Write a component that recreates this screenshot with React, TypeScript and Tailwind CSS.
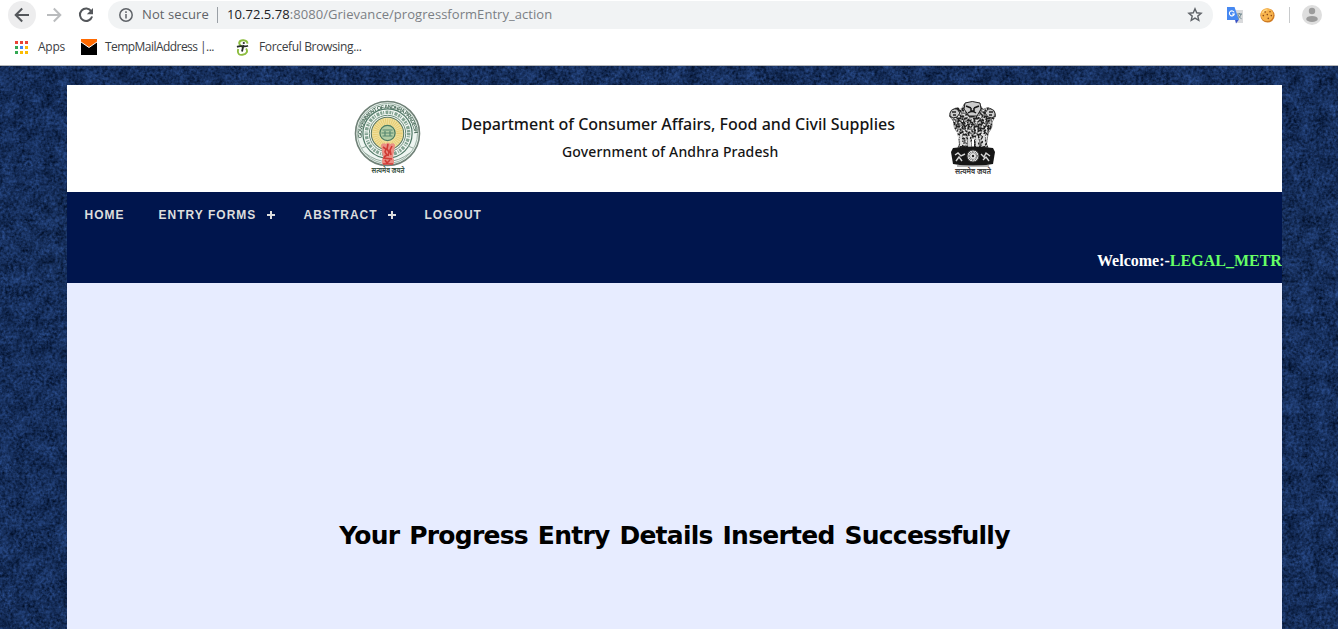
import React from "react";

function AppsIcon() {
  const colors = ["#ea4335", "#ea4335", "#ea4335", "#34a853", "#4285f4", "#fbbc04", "#34a853", "#fbbc04", "#fbbc04"];
  return (
    <svg width="13" height="13" viewBox="0 0 13 13" shapeRendering="crispEdges">
      {colors.map((c, i) => (
        <rect key={i} x={(i % 3) * 5} y={Math.floor(i / 3) * 5} width="3" height="3" fill={c} />
      ))}
    </svg>
  );
}

function BrowserBar() {
  return (
    <div className="relative z-10 h-[66px] shrink-0 border-b border-[#b5b7ba] bg-white font-['Open_Sans',sans-serif]">
      <div className="flex h-[30px] items-center pl-2">
        <div className="flex h-7 w-7 items-center justify-center rounded-full bg-[#ededee]">
          <svg width="16" height="16" viewBox="0 0 16 16" fill="none" stroke="#54575b" strokeWidth="2">
            <path d="M15 8H2M8.2 1.5 1.7 8l6.5 6.5" />
          </svg>
        </div>
        <svg className="ml-[10px]" width="16" height="16" viewBox="0 0 16 16" fill="none" stroke="#babcbe" strokeWidth="2">
          <path d="M1 8h13M7.8 1.5 14.3 8l-6.5 6.5" />
        </svg>
        <svg className="ml-4" width="16" height="16" viewBox="0 0 16 16">
          <path d="M13.3 4.2A6.2 6.2 0 1 0 14.1 9.5" fill="none" stroke="#54575b" strokeWidth="2" />
          <path d="M15 1v6.2H8.8z" fill="#54575b" />
        </svg>
        <div className="ml-[14px] flex h-7 w-[1105px] items-center rounded-full bg-[#f1f3f4] pl-[11px] text-[13px]">
          <svg width="14" height="14" viewBox="0 0 14 14" fill="none" stroke="#5f6368" strokeWidth="1.5">
            <circle cx="7" cy="7" r="6.2" />
            <path d="M7 6v4.4M7 3.3v1.6" />
          </svg>
          <span className="ml-[9px] w-[75px] whitespace-nowrap tracking-[0.1px] text-[#5f6368]">Not secure</span>
          <span className="h-4 w-px bg-[#9aa0a6]" />
          <span className="ml-[9px] whitespace-nowrap tracking-[0.05px] text-[#7b7f84]">
            <span className="text-[#202124]">10.72.5.78</span>:8080/Grievance/progressformEntry_action
          </span>
          <svg className="ml-auto mr-[10px]" width="16" height="16" viewBox="0 0 16 16" fill="none" stroke="#5f6368" strokeWidth="1.4">
            <path d="m8 1.8 1.7 4 4.4.4-3.3 2.9 1 4.3L8 11.1l-3.8 2.3 1-4.3-3.3-2.9 4.4-.4z" />
          </svg>
        </div>
        <svg className="ml-[14px]" width="16" height="17" viewBox="0 0 16 17">
          <path d="M5 3h11v13H9z" fill="#d9dadc" />
          <path d="M8 12.5h4L9 16.4z" fill="#3750c8" />
          <path d="M0 0h7.5L12 13H0z" fill="#4688f1" />
          <path d="M7.2 5.4A2.5 2.5 0 1 0 7.3 7H5" fill="none" stroke="white" strokeWidth="1.1" />
          <path d="M10 7h5M12.3 6v1M14 7c-.3 2-1.5 3.5-3 4.5M11 8c.7 1.6 1.8 2.7 3.5 3.7" fill="none" stroke="#607d83" strokeWidth=".9" />
        </svg>
        <svg className="ml-[17px]" width="15" height="15" viewBox="0 0 15 15">
          <circle cx="7.5" cy="7.5" r="7.1" fill="#cf7b22" />
          <circle cx="7" cy="6.6" r="6.4" fill="#f7b34c" />
          <path d="M2.5 5a5 5 0 0 1 5-3" stroke="#ffd883" strokeWidth="1.2" fill="none" />
          <g fill="#8a4a1c">
            <circle cx="5.2" cy="4" r=".8" /><circle cx="10" cy="3.8" r=".8" /><circle cx="7.3" cy="6.6" r=".8" />
            <circle cx="3.3" cy="7.6" r=".8" /><circle cx="11.3" cy="7.6" r=".8" /><circle cx="8.3" cy="10.4" r=".8" />
          </g>
        </svg>
        <span className="ml-[14px] h-4 w-px bg-[#c8cacc]" />
        <svg className="ml-[12px]" width="20" height="20" viewBox="0 0 20 20">
          <circle cx="10" cy="10" r="10" fill="#dedede" />
          <circle cx="10" cy="6" r="3.2" fill="#9b9b9b" />
          <ellipse cx="10" cy="13.9" rx="5.8" ry="3" fill="#9b9b9b" />
        </svg>
      </div>
      <div className="flex h-[34px] items-center pl-[15px] text-[12px] text-[#3c4043]">
        <AppsIcon />
        <span className="ml-[10px] w-[43px] whitespace-nowrap tracking-[-0.25px]">Apps</span>
        <svg width="16" height="16" viewBox="0 0 16 16">
          <path d="M0 0h16v16H0z" fill="#000" />
          <path d="M0 0h16v3L8 8.5 0 3z" fill="#ff6a00" />
          <path d="m0 3 8 5.5L16 3" fill="none" stroke="white" strokeWidth="1" />
        </svg>
        <span className="ml-2 w-[130px] whitespace-nowrap tracking-[-0.55px]">TempMailAddress |...</span>
        <svg width="16" height="17" viewBox="0 0 16 17" fill="none">
          <path d="M12.5 4.6C12.2.4 5 .2 4.2 3.7 3.7 6.4 7 7.3 8.4 8.4M3.2 10C1.9 15.6 5 16.2 7.5 15.8 12 15.3 13 12 11 9.5" stroke="#8cbd3f" strokeWidth="1.9" />
          <path d="M2 7.8c3.8-1.6 7.5.6 11-1.1M8.5 6 7 12.5" stroke="#252c26" strokeWidth="1.8" />
          <circle cx="8.8" cy="4" r="1.1" fill="#252c26" />
        </svg>
        <span className="ml-2 whitespace-nowrap tracking-[-0.35px]">Forceful Browsing...</span>
      </div>
    </div>
  );
}

function StateSeal() {
  return (
    <svg width="70" height="80" viewBox="0 0 70 80">
      <defs>
        <path id="seal-ring" d="M9 39a26.2 26.2 0 1 1 52 0" />
        <filter id="seal-soft"><feGaussianBlur stdDeviation=".4" /></filter>
      </defs>
      <g filter="url(#seal-soft)">
        <circle cx="34.5" cy="34.5" r="32" fill="#eef5f1" stroke="#6f8177" strokeWidth="1.6" />
        <circle cx="34.5" cy="34.5" r="30" fill="none" stroke="#9eb5a8" strokeWidth="1" />
        <text className="fill-[#4b6c5b] font-['Liberation_Sans',sans-serif] text-[5.6px] font-bold">
          <textPath href="#seal-ring" textLength="84">GOVERNMENT OF ANDHRA PRADESH</textPath>
        </text>
        <circle cx="34.5" cy="34.5" r="24.6" fill="#f3f8f4" stroke="#4f7866" strokeWidth="1.2" />
        <circle cx="34.5" cy="34.5" r="21.2" fill="none" stroke="#83a392" strokeWidth="3.4" strokeDasharray="2 .8 1 1.4 3 1" />
        <circle cx="34.5" cy="34.5" r="18.2" fill="none" stroke="#678b78" strokeWidth="1" />
        <circle cx="34.5" cy="34.5" r="16.2" fill="#f0df9a" stroke="#5c7862" strokeWidth="1.1" />
        <circle cx="34.5" cy="34.5" r="12" fill="none" stroke="#e5ca70" strokeWidth="6" strokeDasharray=".8 1.2" />
        <circle cx="34.5" cy="34" r="7.6" fill="#b3cda5" stroke="#4b7b61" strokeWidth="1.3" />
        <path d="M29.5 31h10M28.5 34h12M29.5 37h10M32 32v5M37 32v5" stroke="#578770" strokeWidth="1.2" />
        <path d="M9 49l5-2M12 54q22 17 45 0M55 47l5 2" fill="none" stroke="#8fa599" strokeWidth="1" />
        <path d="M28 46q2-3 5-1 2-3 4 0 4-2 5 1l-1 7-1 5 1 3v4H29v-4l1-3-1-5z" fill="#ea8f84" />
        <path d="M30 48l3 2-1 3 2 3-3 2M35 45l-1 5 2 3-1 4M39 47l-2 4 1 5M30 59l9 1M30 65h10M32 61l2 3 3-3" fill="none" stroke="#cf3a34" strokeWidth="1.6" />
      </g>
      <text x="35" y="73.5" textAnchor="middle" textLength="33" lengthAdjust="spacingAndGlyphs" className="fill-[#42584b] font-['Noto_Sans',sans-serif] text-[8px] font-bold">सत्यमेव जयते</text>
    </svg>
  );
}

function LionCapital() {
  return (
    <svg width="50" height="76" viewBox="0 0 50 76">
      <defs>
        <filter id="fur" x="-5%" y="-5%" width="110%" height="110%">
          <feTurbulence type="fractalNoise" baseFrequency=".5" numOctaves="2" seed="4" result="noise" />
          <feColorMatrix in="noise" type="matrix" values="0 0 0 0 .8  0 0 0 0 .8  0 0 0 0 .8  4 0 0 0 -1.8" result="flecks" />
          <feComposite in="flecks" in2="SourceGraphic" operator="in" result="highlights" />
          <feMerge result="coat"><feMergeNode in="SourceGraphic" /><feMergeNode in="highlights" /></feMerge>
          <feGaussianBlur in="coat" stdDeviation=".4" />
        </filter>
      </defs>
      <g filter="url(#fur)" fill="#222">
        <path d="M16 4q4-3 8-1 5-2 8 1l3 5 5-2 6 3 2 6-3 5-1 7-4 6-5 4-3-2-7 3-7-3-3 2-5-4-4-6-1-7-4-5 2-6 6-3 4 2z" />
        <path d="M9 30h8l1 19H9l2-5zM18 33h6v16h-6zM26 33h6v16h-6zM33 30h8l-2 14 2 5h-9z" />
      </g>
      <g fill="none" stroke="#222" strokeWidth="1">
        <path d="M2 13q2-5 7-4l3 4-3 4-4 1-3-2zm45 0q-2-5-7-4l-3 4 3 4 4 1 3-2z" fill="#ccc" />
        <path d="M4 12h4m-3 3h3M45 12h-4m3 3h-3" strokeWidth="1.4" />
        <path d="M11 19q-3 4 1 8M38 19q3 4-1 8M17 18q-4 6 1 11M32 18q4 6-1 11" />
        <path d="M17 3q7-3 15 0l1 6-4 7h-8l-5-7z" fill="#ccc" />
        <path d="m18 6 5 2m8-2-5 2m-3 0v3h3V8m-6 5q4-3 8 0" stroke="#151515" strokeWidth="1.5" />
      </g>
      <path d="M13 34v12M21 36v12M29 36v12M36 34v12" stroke="#e6e6e6" strokeWidth="1.8" />
      <path d="M5 48q20-3 40 0l2 4-2 12q-20 4-40 0L3 52z" fill="#161616" />
      <path d="m7 55 3-2 3 3 4-2M33 54l3 3 2-4 4 3M8 61l3-4 3 4m21-1 3-3 3 4" fill="none" stroke="#d5d5d5" strokeWidth="1.4" />
      <circle cx="25" cy="56" r="6" fill="#e5e5e5" stroke="#333" />
      <circle cx="25" cy="56" r="3.8" fill="none" stroke="#555" strokeWidth="2" strokeDasharray=".7 .8" />
      <circle cx="25" cy="56" r="1.2" fill="#222" />
      <path d="M9 66h32" stroke="#999" strokeWidth="1.5" />
      <text x="25" y="74" textAnchor="middle" textLength="36" lengthAdjust="spacingAndGlyphs" className="fill-[#444] font-['Noto_Sans',sans-serif] text-[8px] font-bold">सत्यमेव जयते</text>
    </svg>
  );
}

function Plus() {
  return (
    <svg width="8" height="8" viewBox="0 0 8 8" shapeRendering="crispEdges" className="mb-px">
      <path d="M3 0h2v3h3v2H5v3H3V5H0V3h3z" fill="#ddd" />
    </svg>
  );
}

export default function App() {
  return (
    <div className="relative flex h-[629px] w-[1338px] flex-col overflow-hidden bg-[#142f60]">
      <svg className="absolute inset-0" width="1338" height="629" aria-hidden="true">
        <filter id="felt" x="0" y="0" width="100%" height="100%" colorInterpolationFilters="sRGB">
          <feTurbulence type="fractalNoise" baseFrequency=".36" numOctaves="2" seed="12" result="fine" />
          <feTurbulence type="fractalNoise" baseFrequency=".07" numOctaves="3" seed="5" result="broad" />
          <feComposite in="fine" in2="broad" operator="arithmetic" k2=".6" k3=".4" />
          <feColorMatrix type="matrix" values=".28 0 0 0 -.055  .42 0 0 0 -.03  .68 0 0 0 .015  0 0 0 0 1" />
        </filter>
        <rect width="1338" height="629" filter="url(#felt)" />
      </svg>
      <BrowserBar />
      <main className="relative z-10 ml-[67px] mt-[19px] flex min-h-0 w-[1215px] flex-1 flex-col overflow-hidden bg-[#e7ecff]">
        <header className="flex h-[107px] shrink-0 bg-white pl-[286px] pt-[14px]">
          <StateSeal />
          <div className="ml-[38px] w-[434px] pt-[13px] font-['Noto_Sans',sans-serif] font-medium text-[#151515]">
            <div className="whitespace-nowrap text-[16px] leading-[24px]">Department of Consumer Affairs, Food and Civil Supplies</div>
            <div className="ml-[101px] mt-1 whitespace-nowrap text-[14px] leading-[24px] tracking-[0.16px]">Government of Andhra Pradesh</div>
          </div>
          <div className="ml-[53px] mt-px"><LionCapital /></div>
        </header>
        <div className="h-[91px] shrink-0 bg-[#00154d]">
          <nav className="flex h-[46px] items-center pl-[17.5px] font-['Liberation_Sans',sans-serif] text-[12px] font-bold tracking-[1.02px] text-[#ddd]">
            <a className="w-[74px]">HOME</a>
            <a className="flex w-[145px] items-center whitespace-nowrap"><span className="w-[108.5px]">ENTRY FORMS</span><Plus /></a>
            <a className="flex w-[121px] items-center whitespace-nowrap"><span className="w-[84.5px]">ABSTRACT</span><Plus /></a>
            <a>LOGOUT</a>
          </nav>
          <div className="ml-[1030px] mt-[13px] overflow-hidden whitespace-nowrap font-['Liberation_Serif',serif] text-[16px] font-bold leading-5 text-white">
            Welcome:-<span className="text-[#66ff66]">LEGAL_METR</span>
          </div>
        </div>
        <h1 className="mt-[233px] whitespace-nowrap text-center font-['DejaVu_Sans',sans-serif] text-[25px] font-bold leading-10 tracking-[-0.75px] [word-spacing:1.9px] text-black">Your Progress Entry Details Inserted Successfully</h1>
      </main>
    </div>
  );
}
